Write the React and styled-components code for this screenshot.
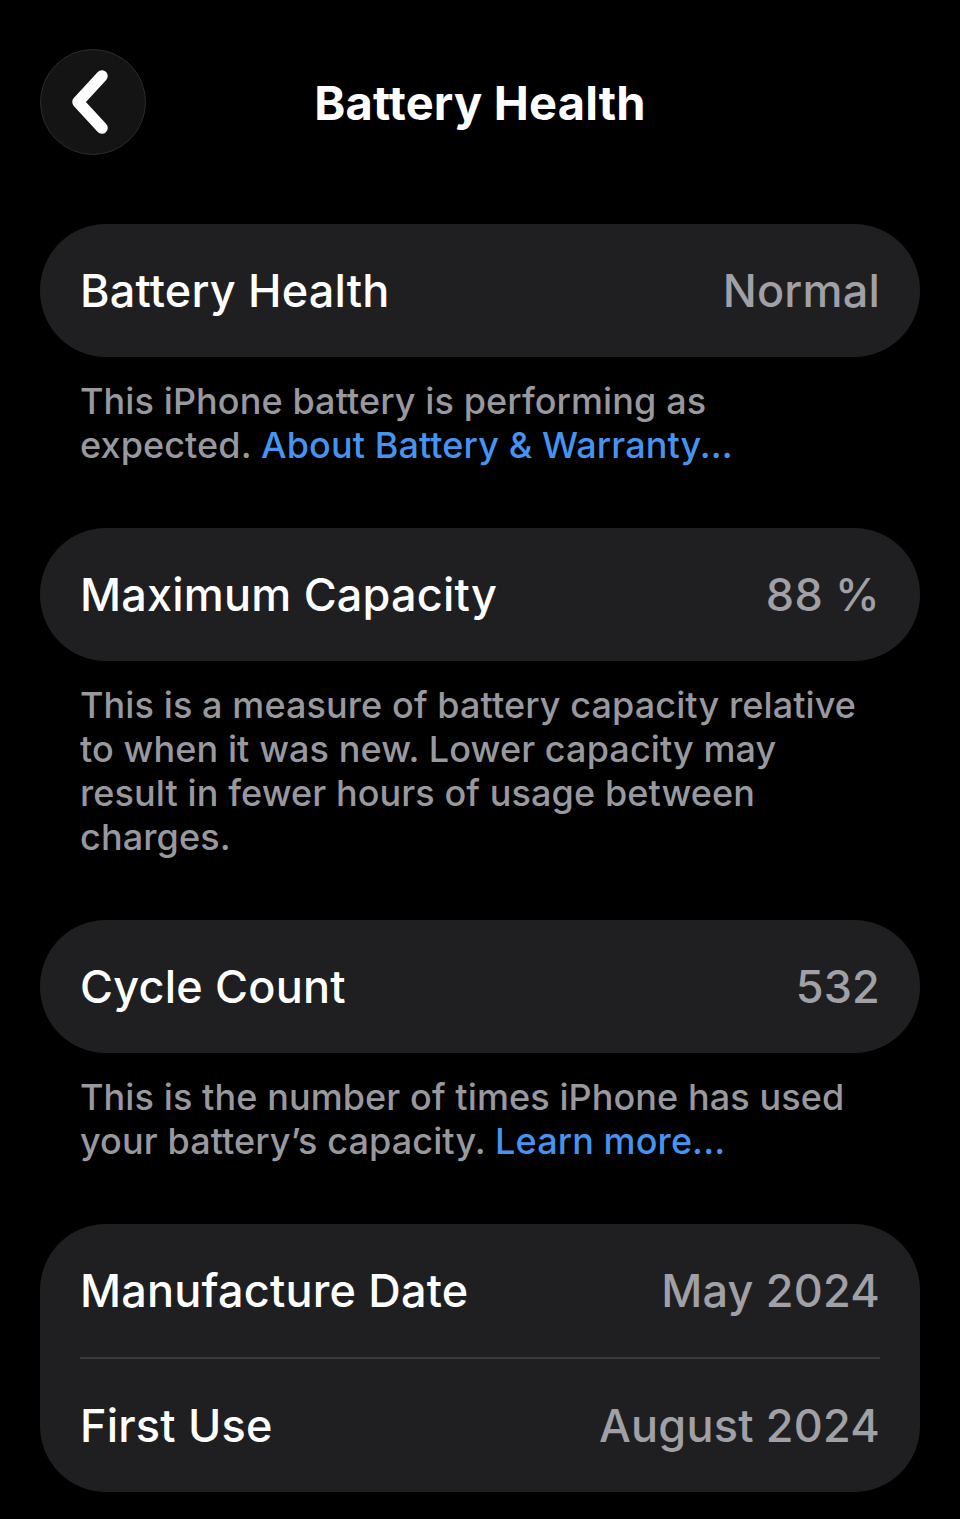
import React from 'react';
import styled, { createGlobalStyle } from 'styled-components';

const GlobalStyle = createGlobalStyle`
  html, body {
    margin: 0;
    padding: 0;
    background: #000;
  }
  body {
    font-family: Inter, "Noto Sans", sans-serif;
    -webkit-font-smoothing: antialiased;
  }
`;

const Page = styled.div`
  width: 960px;
  min-height: 1519px;
  background: #000;
  color: #fff;
  box-sizing: border-box;
  padding: 49px 40px 0;
`;

const NavBar = styled.div`
  position: relative;
  height: 106px;
  display: flex;
  align-items: center;
  justify-content: center;
  margin-bottom: 69px;
`;

const BackButton = styled.button`
  position: absolute;
  left: 0;
  top: 0;
  width: 106px;
  height: 106px;
  border-radius: 50%;
  background: #141414;
  border: 1.5px solid #2c2c2e;
  display: flex;
  align-items: center;
  justify-content: center;
  padding: 0 4px 0 0;
`;

const Title = styled.h1`
  margin: 0;
  font-size: 47px;
  font-weight: 700;
  letter-spacing: 0.2px;
`;

const Section = styled.section`
  margin-bottom: 61px;
`;

const Card = styled.div`
  background: #1f1f21;
  border-radius: 66px;
  padding: 0 40px;
`;

const Row = styled.div`
  height: 133px;
  display: flex;
  align-items: center;
  justify-content: space-between;
  border-top: ${p => (p.divided ? '2px solid #3a3a3c' : 'none')};
`;

const Label = styled.span`
  font-size: 45px;
  font-weight: 500;
  letter-spacing: 0.2px;
`;

const Value = styled(Label)`
  color: #a0a0a6;
`;

const Note = styled.p`
  margin: 0;
  padding: 22px 40px 0;
  font-size: 36px;
  line-height: 44px;
  font-weight: 500;
  letter-spacing: 0.1px;
  color: #98989e;
`;

const Link = styled.a`
  color: #4694f0;
  text-decoration: none;
`;

const Chevron = () => (
  <svg width="40" height="64" viewBox="0 0 40 64">
    <path
      d="M31 6 L7 32 L31 58"
      fill="none"
      stroke="#fff"
      strokeWidth="11.5"
      strokeLinecap="round"
      strokeLinejoin="round"
    />
  </svg>
);

export default function App() {
  return (
    <Page>
      <GlobalStyle />
      <NavBar>
        <BackButton aria-label="Back">
          <Chevron />
        </BackButton>
        <Title>Battery Health</Title>
      </NavBar>

      <Section>
        <Card>
          <Row>
            <Label>Battery Health</Label>
            <Value>Normal</Value>
          </Row>
        </Card>
        <Note>
          This iPhone battery is performing as expected.{' '}
          <Link>About Battery &amp; Warranty...</Link>
        </Note>
      </Section>

      <Section>
        <Card>
          <Row>
            <Label>Maximum Capacity</Label>
            <Value>88 %</Value>
          </Row>
        </Card>
        <Note>
          This is a measure of battery capacity relative to when it was new.
          Lower capacity may result in fewer hours of usage between charges.
        </Note>
      </Section>

      <Section>
        <Card>
          <Row>
            <Label>Cycle Count</Label>
            <Value>532</Value>
          </Row>
        </Card>
        <Note>
          This is the number of times iPhone has used your battery’s capacity.{' '}
          <Link>Learn more...</Link>
        </Note>
      </Section>

      <Card>
        <Row>
          <Label>Manufacture Date</Label>
          <Value>May 2024</Value>
        </Row>
        <Row divided>
          <Label>First Use</Label>
          <Value>August 2024</Value>
        </Row>
      </Card>
    </Page>
  );
}
